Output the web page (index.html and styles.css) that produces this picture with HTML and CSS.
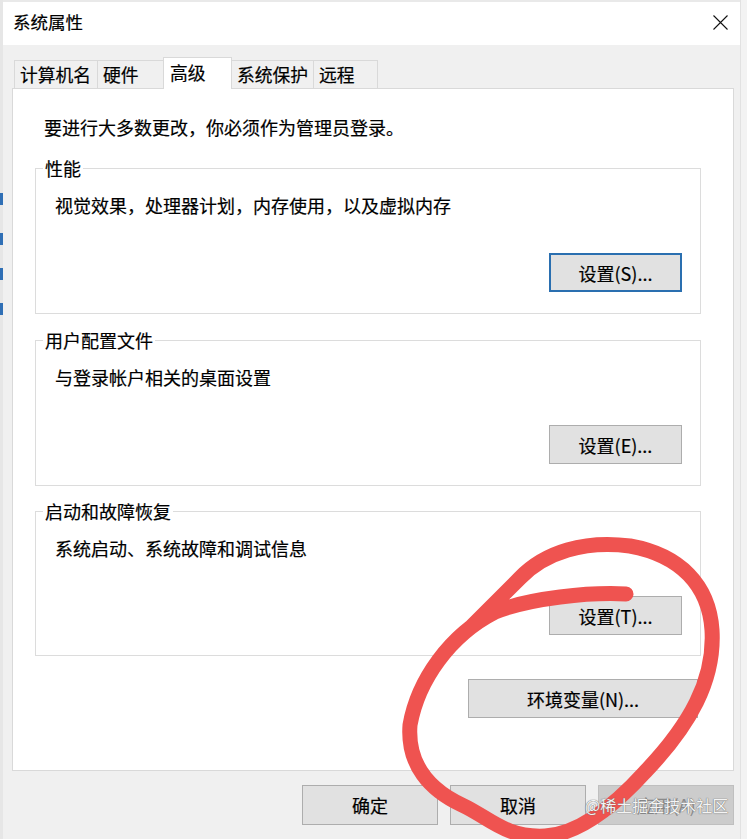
FILE: index.html
```html
<!DOCTYPE html>
<html lang="zh-CN">
<head>
<meta charset="utf-8">
<title>系统属性</title>
<link rel="stylesheet" href="styles.css">
</head>
<body>
<div class="screen">
  <div class="edge-left">
    <span class="mark m1"></span>
    <span class="mark m2"></span>
    <span class="mark m3"></span>
    <span class="mark m4"></span>
  </div>
  <div class="window">
    <div class="titlebar">
      <span class="title">系统属性</span>
      <svg class="close" width="15" height="15" viewBox="0 0 15 15"><path d="M0.5 0.5 L14.5 14.5 M14.5 0.5 L0.5 14.5" stroke="#111" stroke-width="1.1" fill="none"/></svg>
    </div>
    <div class="tabs">
      <div class="tab w1">计算机名</div>
      <div class="tab w2">硬件</div>
      <div class="tab active w3">高级</div>
      <div class="tab w4">系统保护</div>
      <div class="tab w5">远程</div>
    </div>
    <div class="panel">
      <p class="note">要进行大多数更改，你必须作为管理员登录。</p>
      <section class="group g1">
        <div class="legend">性能</div>
        <p class="desc">视觉效果，处理器计划，内存使用，以及虚拟内存</p>
        <div class="btn-row"><button class="btn focus">设置(S)...</button></div>
      </section>
      <section class="group g2">
        <div class="legend">用户配置文件</div>
        <p class="desc">与登录帐户相关的桌面设置</p>
        <div class="btn-row"><button class="btn">设置(E)...</button></div>
      </section>
      <section class="group g3">
        <div class="legend">启动和故障恢复</div>
        <p class="desc">系统启动、系统故障和调试信息</p>
        <div class="btn-row"><button class="btn">设置(T)...</button></div>
      </section>
      <div class="env-row"><button class="btn env">环境变量(N)...</button></div>
    </div>
    <div class="actions">
      <button class="btn act">确定</button>
      <button class="btn act">取消</button>
      <button class="btn act disabled">应用(A)</button>
    </div>
  </div>
  <div class="edge-right"></div>
  <svg class="scribble" width="747" height="839" viewBox="0 0 747 839">
    <path d="M626,594 C590,592 530,598 495,612 C450,635 418,680 410,725 C407,765 430,790 462,805 C490,818 505,838 545,836 C580,834 615,805 645,772 C690,725 715,680 712,630 C709,585 680,555 630,546 C585,540 545,552 520,578 C505,593 490,608 470,628" fill="none" stroke="#ef5350" stroke-width="15" stroke-linecap="round" stroke-linejoin="round"/>
  </svg>
  <div class="watermark">@稀土掘金技术社区</div>
</div>
</body>
</html>
```

FILE: styles.css
```css
* { box-sizing: border-box; }
html, body { margin: 0; padding: 0; }
body {
  background: #f0f0f0;
  font-family: "Noto Sans CJK SC", "Noto Sans", sans-serif;
  color: #000;
  -webkit-text-stroke: 0.2px #000;
}
.screen {
  position: relative;
  width: 747px;
  height: 839px;
  overflow: hidden;
  display: flex;
  background: #f0f0f0;
}
.edge-left {
  width: 3px;
  flex: none;
  background: #e6e6e6;
  display: flex;
  flex-direction: column;
}
.mark { display: block; width: 3px; height: 12px; background: #2f6fb5; }
.m1 { margin-top: 193px; }
.m2 { margin-top: 28px; }
.m3 { margin-top: 23px; }
.m4 { margin-top: 23px; }
.edge-right { width: 7px; flex: none; background: #f3f3f3; border-left: 1px solid #e2e2e2; }
.window {
  width: 737px;
  flex: none;
  background: #f0f0f0;
  display: flex;
  flex-direction: column;
}
.titlebar {
  height: 45px;
  border-top: 2px solid #e9e9e9;
  background: #fff;
  display: flex;
  align-items: center;
  justify-content: space-between;
  padding: 0 12px 3px 10px;
}
.title { font-size: 17.5px; line-height: 24px; }
.close { display: block; margin-top: 1px; }
.tabs {
  margin: 12px 0 0 11px;
  height: 31px;
  display: flex;
  align-items: flex-end;
}
.tab {
  height: 28px;
  border: 1px solid #d9d9d9;
  border-bottom: none;
  background: #f0f0f0;
  font-size: 17.8px;
  line-height: 24px;
  padding: 1px 0 0 5px;
  white-space: nowrap;
  margin-right: -1px;
}
.tab.active {
  height: 32px;
  margin-bottom: -1px;
  background: #fff;
  position: relative;
  z-index: 1;
  padding-top: 2px;
  padding-left: 6px;
}
.w1 { width: 84px; }
.w2 { width: 67px; }
.w3 { width: 69px; }
.w4 { width: 83px; }
.w5 { width: 65px; }
.panel {
  margin-left: 9px;
  width: 722px;
  height: 683px;
  background: #fff;
  border: 1px solid #d9d9d9;
  padding-top: 26px;
  display: flex;
  flex-direction: column;
}
.note {
  margin: 0;
  padding-left: 31px;
  font-size: 18px;
  line-height: 24px;
}
.group {
  margin-left: 22px;
  width: 666px;
  height: 146px;
  border: 1px solid #dcdcdc;
}
.g1 { margin-top: 29px; }
.g2 { margin-top: 26px; }
.g3 { margin-top: 25px; height: 145px; }
.legend {
  width: fit-content;
  margin: -13px 0 0 7px;
  padding: 0 2px;
  background: #fff;
  font-size: 18px;
  line-height: 24px;
}
.desc {
  margin: 13px 0 0 19px;
  font-size: 18px;
  line-height: 24px;
}
.btn-row {
  display: flex;
  justify-content: flex-end;
  padding-right: 18px;
  margin-top: 36px;
}
.btn {
  font-family: "Noto Sans CJK SC", "Noto Sans", sans-serif;
  font-size: 18px;
  line-height: 24px;
  color: #000;
  background: #e1e1e1;
  border: 1px solid #adadad;
  border-radius: 0;
  width: 133px;
  height: 39px;
  padding: 0;
}
.btn.focus { border: 2px solid #2a6fb0; }
.env-row {
  display: flex;
  justify-content: flex-end;
  padding-right: 35px;
  margin-top: 23px;
}
.btn.env { width: 230px; }
.actions {
  display: flex;
  gap: 12px;
  margin-top: 14px;
  padding-left: 299px;
}
.btn.act { width: 136px; height: 40px; }
.btn.disabled { background: #cccccc; border-color: #bfbfbf; color: #8a8a8a; -webkit-text-stroke: 0; }
.scribble {
  position: absolute;
  left: 0;
  top: 0;
  pointer-events: none;
}
.watermark {
  position: absolute;
  left: 585px;
  top: 793px;
  font-size: 16px;
  line-height: 24px;
  color: #f4f4f4;
  -webkit-text-stroke: 0;
  text-shadow: 0 0 1px #6f6f6f, 0 0 1px #6f6f6f;
  white-space: nowrap;
}
```
